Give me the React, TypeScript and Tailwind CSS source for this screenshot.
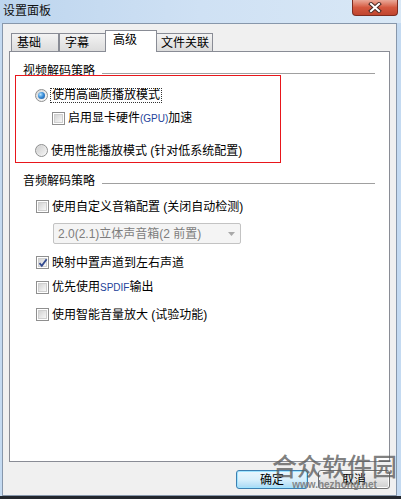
import React from "react";

const font = {
  fontFamily: '"Liberation Sans", "Noto Sans CJK SC", sans-serif',
};

// Win7 style check box
const CheckBox = ({ checked = false }: { checked?: boolean }) => (
  <span className="relative flex h-[13px] w-[13px] shrink-0 items-center justify-center border border-[#8f8f8f] bg-white">
    <span className="h-[9px] w-[9px] border border-[#cfcfcf] bg-gradient-to-br from-[#d4d4d4] to-[#f7f7f7]" />
    {checked && (
      <svg
        className="absolute left-[1px] top-[1px]"
        width="10"
        height="10"
        viewBox="0 0 10 10"
      >
        <path
          d="M1.5 5.2 L3.8 7.8 L8.6 1.2"
          fill="none"
          stroke="#31498f"
          strokeWidth="1.8"
        />
      </svg>
    )}
  </span>
);

const Radio = ({ checked = false }: { checked?: boolean }) => (
  <span className="flex h-[13px] w-[13px] shrink-0 items-center justify-center rounded-full border border-[#8e8f8f] bg-gradient-to-br from-[#d6d6d6] to-[#fbfbfb]">
    {checked ? (
      <span className="h-[7px] w-[7px] rounded-full bg-[radial-gradient(circle_at_35%_35%,#b8e4ff_0%,#3b8fd9_45%,#1a4f96_100%)]" />
    ) : (
      <span className="h-[9px] w-[9px] rounded-full bg-gradient-to-br from-[#cfcfcf] to-[#f4f4f4]" />
    )}
  </span>
);

const GroupHeader = ({ label }: { label: string }) => (
  <div className="flex h-[14px] items-start pl-[13px] pr-[14px]">
    <span className="whitespace-nowrap text-[12px] leading-[14px]">{label}</span>
    <span className="ml-[7px] mt-[9px] h-px flex-1 bg-[#a0a0a0]" />
  </div>
);

const CheckRow = ({
  checked,
  className,
  children,
}: {
  checked?: boolean;
  className: string;
  children: React.ReactNode;
}) => (
  <div className={`flex h-[15px] items-center ${className}`}>
    <CheckBox checked={checked} />
    <span className="ml-[3px] whitespace-nowrap text-[12px] leading-[14px]">
      {children}
    </span>
  </div>
);

const Tab = ({
  label,
  width,
  selected = false,
}: {
  label: string;
  width: string;
  selected?: boolean;
}) =>
  selected ? (
    <div
      className={`relative z-10 -ml-[2px] -mb-px h-[22px] ${width} border border-b-0 border-[#898c95] bg-white pl-[7px] pt-[2px] text-[12px] leading-[14px]`}
    >
      {label}
    </div>
  ) : (
    <div
      className={`h-[18px] ${width} border border-b-0 border-[#898c95] bg-gradient-to-b from-[#f3f3f3] to-[#dcdcdc] pl-[5px] pt-[2px] text-[12px] leading-[14px]`}
    >
      {label}
    </div>
  );

export default function App() {
  return (
    <div
      className="relative flex h-[499px] w-[401px] flex-col overflow-hidden bg-[#c4daf1] text-black"
      style={font}
    >
      {/* Title bar */}
      <div className="flex h-[23px] shrink-0 justify-between bg-gradient-to-r from-[#bdd5ee] via-[#cfe1f4] to-[#d9e8f6]">
        <span className="pl-[3px] pt-[4px] text-[12px] leading-[14px] text-[#111]">
          设置面板
        </span>
        <div className="mr-[3px] flex h-[16px] w-[46px] items-center justify-center rounded-b-[4px] border border-t-0 border-[#7d2c20] bg-gradient-to-b from-[#e9a898] via-[#d4583f] to-[#c0452f]">
          <svg width="14" height="11" viewBox="0 0 14 11">
            <path
              d="M3 2 L11 9 M11 2 L3 9"
              stroke="#4a2a25"
              strokeWidth="4"
              strokeLinecap="square"
            />
            <path
              d="M3 2 L11 9 M11 2 L3 9"
              stroke="#ffffff"
              strokeWidth="2"
              strokeLinecap="square"
            />
          </svg>
        </div>
      </div>

      {/* Client area */}
      <div className="ml-[2px] mr-[4px] flex flex-1 flex-col border border-[#8797ab] bg-[#f0f0f0]">
        {/* Tabs */}
        <div className="ml-[8px] mt-[7px] flex h-[20px] items-end">
          <Tab label="基础" width="w-[48px]" />
          <Tab label="字幕" width="w-[48px]" />
          <Tab label="高级" width="w-[52px]" selected />
          <div className="-ml-[2px]">
            <Tab label="文件关联" width="w-[58px]" />
          </div>
        </div>

        {/* Panel */}
        <div className="ml-[6px] flex h-[411px] w-[381px] flex-col border border-[#898c95] bg-white">
          <div className="mt-[12px]">
            <GroupHeader label="视频解码策略" />
          </div>

          <div className="-mt-[3px] ml-[5px] flex h-[88px] w-[266px] flex-col border border-[#e8161b]">
            <div className="ml-[19px] mt-[12px] flex h-[15px] items-center">
              <Radio checked />
              <span className="ml-[2px] border border-dotted border-[#333] px-px text-[12px] leading-[13px]">
                使用高画质播放模式
              </span>
            </div>
            <div className="ml-[36px] mt-[8px] flex h-[15px] items-center">
              <CheckBox />
              <span className="ml-[3px] whitespace-nowrap text-[12px] leading-[14px]">
                启用显卡硬件
                <span className="text-[10px] text-[#24439a]">(GPU)</span>
                加速
              </span>
            </div>
            <div className="ml-[19px] mt-[17px] flex h-[15px] items-center">
              <Radio />
              <span className="ml-[3px] whitespace-nowrap text-[12px] leading-[14px]">
                使用性能播放模式 (针对低系统配置)
              </span>
            </div>
          </div>

          <div className="mt-[11px]">
            <GroupHeader label="音频解码策略" />
          </div>

          <CheckRow className="ml-[26px] mt-[11px]">
            使用自定义音箱配置 (关闭自动检测)
          </CheckRow>

          <div className="ml-[43px] mt-[9px] flex h-[21px] w-[188px] items-center justify-between rounded-[2px] border border-[#c3c3c3] bg-[#f4f4f4] pl-[4px] pr-[5px]">
            <span className="whitespace-nowrap text-[12px] leading-[14px] text-[#7d7d7d]">
              2.0(2.1)立体声音箱(2 前置)
            </span>
            <svg width="7" height="4" viewBox="0 0 7 4">
              <path d="M0 0 L7 0 L3.5 4 Z" fill="#a8a8a8" />
            </svg>
          </div>

          <CheckRow checked className="ml-[26px] mt-[11px]">
            映射中置声道到左右声道
          </CheckRow>
          <CheckRow className="ml-[26px] mt-[10px]">
            优先使用<span className="text-[10px] text-[#24439a]">SPDIF</span>输出
          </CheckRow>
          <CheckRow className="ml-[26px] mt-[12px]">
            使用智能音量放大 (试验功能)
          </CheckRow>
        </div>

        {/* Buttons */}
        <div className="mr-[6px] mt-[8px] flex justify-end gap-[10px]">
          <button className="flex h-[19px] w-[72px] items-center justify-center rounded-[3px] border border-[#3c7fb1] bg-gradient-to-b from-[#eaf6fd] via-[#d9f0fc] to-[#a7d9f5] text-[12px] leading-[14px] shadow-[inset_0_0_0_1px_#9fe4ff]">
            确定
          </button>
          <button className="flex h-[19px] w-[72px] items-center justify-center rounded-[3px] border border-[#707070] bg-gradient-to-b from-[#f2f2f2] via-[#e6e6e6] to-[#cfcfcf] text-[12px] leading-[14px] shadow-[inset_0_0_0_1px_#fcfcfc]">
            取消
          </button>
        </div>
      </div>

      {/* Window bottom edge */}
      <div className="h-[3px] shrink-0 bg-[#23272d]" />

      {/* Watermark over the dialog */}
      <div className="pointer-events-none absolute left-[272px] top-[454px] flex flex-col items-center">
        <span className="whitespace-nowrap text-[25px] font-medium leading-[26px] text-[#5e5e5e]/80">
          合众软件园
        </span>
        <span className="-mt-[1px] whitespace-nowrap text-[10px] font-bold leading-[12px] text-[#7a7a7a]/90">
          www.hezhong.net
        </span>
      </div>
    </div>
  );
}
